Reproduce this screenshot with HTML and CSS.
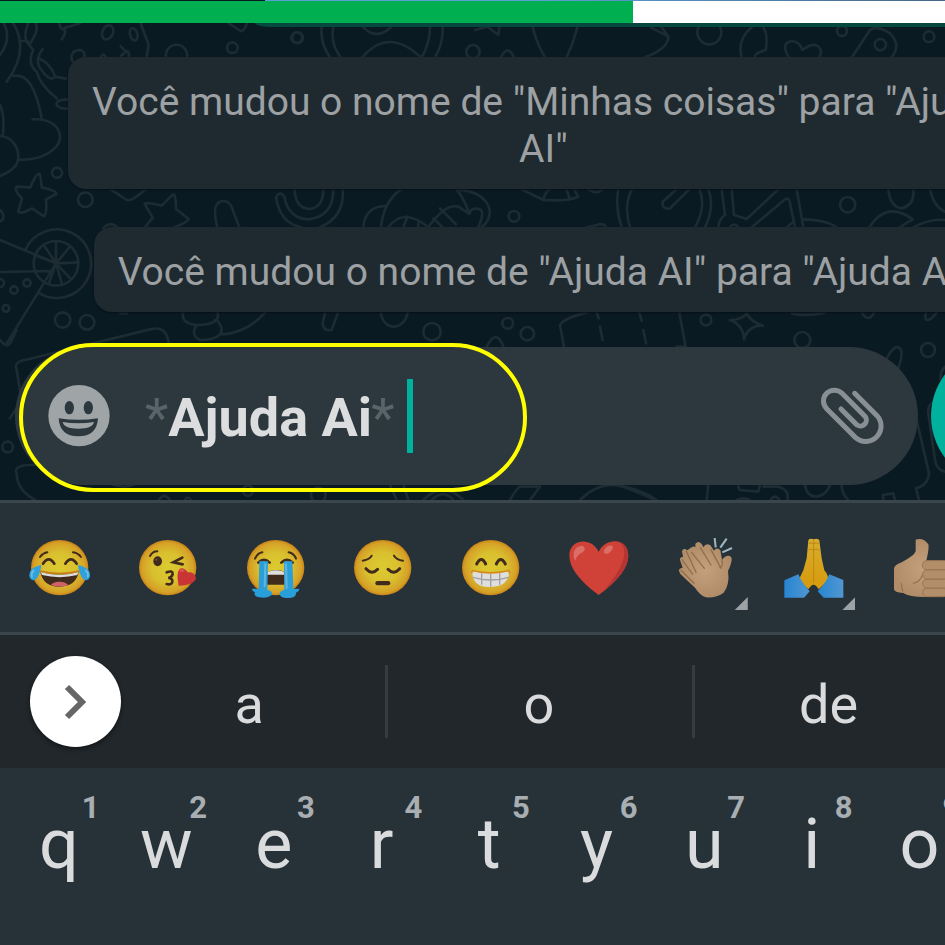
FILE: index.html
```html
<!DOCTYPE html>
<html lang="pt-BR">
<head>
<meta charset="utf-8">
<meta name="viewport" content="width=device-width, initial-scale=1">
<title>Ajuda Ai</title>
<link rel="stylesheet" href="styles.css">
</head>
<body>
<main class="screen">
  <section class="chat">
    <svg class="doodles" viewBox="0 0 2835 1500" preserveAspectRatio="xMinYMin slice" aria-hidden="true">
      <!-- upper left: foliage, giraffe, clouds -->
      <path d="M0 165Q40 110 5 60M40 70Q90 150 20 245M40 228Q100 215 125 355M98 358C150 355 180 380 180 412S130 482 60 479M0 408C35 410 55 440 55 470S30 515 0 528M0 315Q16 350 8 408"/>
      <path d="M85 70Q65 120 90 130Q120 90 105 65M58 123H78L100 150Q80 190 110 215Q120 255 170 295M128 147Q105 175 118 200Q150 250 165 230L198 236M165 228Q150 190 120 177M205 298Q160 300 172 318Q185 328 205 326M178 72Q185 95 193 84Q200 100 185 118M193 84L240 70M422 70L446 135L440 170M362 138Q375 155 380 153Q390 158 386 172M380 153L362 168M303 172Q308 155 318 172"/>
      <ellipse cx="323" cy="97" rx="16" ry="22" transform="rotate(25 323 97)"/><ellipse cx="401" cy="103" rx="11" ry="19" transform="rotate(-15 401 103)"/>
      <path d="M228 192C205 180 212 150 240 150Q258 155 252 172M498 172A32 32 0 1 1 561 172M686 70L722 93Q732 95 740 72"/>
      <path d="M118 521Q108 520 91 562L50 560Q40 568 66 595L55 634Q60 645 96 625L132 649Q142 640 138 598L169 582Q170 572 125 562Q122 525 118 521Z"/>
      <path d="M435 682L458 653L434 612Q435 605 485 617L518 584Q528 582 528 627L566 657Q565 665 524 682M332 568L380 600Q395 606 436 568M652 682Q635 615 660 605Q690 595 700 635L718 682M828 592Q840 570 853 590Q865 655 925 658Q1000 650 1000 568M828 592Q840 670 905 682M960 682Q1035 650 1028 568M884 568Q885 625 930 627Q970 622 970 568"/>
      <circle cx="171" cy="518" r="15"/><circle cx="256" cy="599" r="22"/><circle cx="697" cy="143" r="16"/><circle cx="890" cy="113" r="16"/><path d="M310 685Q332 660 354 685M0 630Q12 640 10 652T0 663"/>
      <!-- pizza and citrus -->
      <circle cx="168" cy="790" r="67"/><path d="M76 750A103 103 0 1 1 115 878M0 720L168 790L18 1034M0 816L147 813M168 790V723M168 790L210 740M168 790L235 787M168 790L214 838M168 790L187 855M168 790L146 852M168 790L132 736M168 790L104 765"/>
      <circle cx="81" cy="849" r="11"/><circle cx="42" cy="870" r="11"/><circle cx="18" cy="925" r="10"/><circle cx="0" cy="849" r="12"/><circle cx="188" cy="960" r="23"/><circle cx="261" cy="967" r="22"/>
      <path d="M50 1110Q40 1085 75 1080L450 988Q500 975 506 1030M360 940H380M550 935Q540 970 590 975Q665 975 652 935M590 975Q570 1005 600 1020Q660 1020 665 990Q662 965 645 960M665 1003Q740 1000 795 938M50 1110L65 1200L30 1255M0 1020Q20 1045 30 1030L50 990M130 1395Q35 1390 50 1420Q50 1470 105 1500"/>
      <circle cx="23" cy="1341" r="16"/><path d="M477 1500Q492 1475 510 1500M555 1500Q563 1485 572 1500M330 1450Q370 1470 410 1450"/><circle cx="744" cy="1472" r="15"/>
      <!-- upper centre: alarm clock, whale, clothes -->
      <path d="M965 82Q960 130 990 172M1000 82Q990 130 1022 172M1087 172Q1165 80 1262 172M1090 82Q1130 122 1173 82M1290 82Q1290 130 1265 172M1328 82Q1330 130 1305 172M1425 90L1462 80L1495 105L1498 82M1598 82Q1610 130 1635 172M1732 82Q1720 130 1700 172M1503 172Q1523 130 1542 172"/>
      <circle cx="1419" cy="155" r="20"/><circle cx="893" cy="113" r="16"/>
      <path d="M1090 682Q1095 620 1155 618M1143 682Q1150 605 1203 568M1165 682Q1210 620 1285 682M1370 568Q1460 575 1470 635Q1468 665 1445 682M1285 682Q1335 610 1375 620L1408 642Q1412 620 1440 628Q1455 635 1435 682M1370 568Q1395 600 1408 642M1222 650L1210 682M1255 670V682M1320 625L1368 673M1300 655L1328 682M1565 568L1630 600Q1700 605 1735 590L1722 568M1630 600Q1635 575 1650 568M1700 570L1710 598M1765 568Q1790 585 1808 568M1760 682L1790 675Q1812 668 1818 682"/><circle cx="1542" cy="649" r="16"/>
      <path d="M975 938L968 970Q970 995 995 990L1014 938M1142 938Q1150 980 1185 980Q1215 975 1223 938M1460 1040Q1490 980 1512 1045M1692 1040L1680 975Q1690 955 1760 938M1790 938L1796 955M1800 980L1808 1020"/>
      <circle cx="1296" cy="995" r="26"/><circle cx="1523" cy="970" r="16"/><circle cx="1582" cy="1001" r="20"/>
      <path d="M1170 1455L1190 1500M1210 1455L1225 1500M1270 1500Q1330 1440 1390 1500M1295 1500Q1330 1465 1360 1500M1530 1500Q1550 1465 1560 1460H1620L1590 1500M1740 1500Q1790 1450 1850 1455Q1890 1465 1965 1500"/><circle cx="955" cy="1485" r="22"/>
      <!-- right: guitar, kite, hearts, plane -->
      <path d="M1953 82L2005 110Q2005 145 1935 172M1985 82L2005 110M2255 82Q2210 120 2225 172M2290 82Q2305 105 2297 150Q2262 160 2265 172M2367 172Q2340 130 2375 123Q2400 125 2407 150Q2440 125 2455 140Q2470 155 2457 172M2556 172L2610 90Q2630 75 2670 100Q2705 135 2675 172"/>
      <circle cx="2128" cy="97" r="36"/><circle cx="2526" cy="93" r="15"/><circle cx="2641" cy="134" r="17"/><circle cx="2787" cy="110" r="16"/>
      <path d="M1855 568Q1845 620 1865 682M1895 568Q1870 620 1890 682M2098 568Q2120 620 2085 682M2125 568Q2145 620 2115 682M2030 568L1988 605Q1985 630 2010 625L2068 568M2165 568L2175 645Q2155 660 2155 682M2195 568L2202 645L2240 657L2335 568M2255 682L2355 598Q2368 590 2370 610L2385 682M2390 568L2410 682M2360 682L2375 670M2190 682Q2202 665 2215 682M2410 658Q2480 660 2510 682M2665 568Q2670 620 2705 625Q2745 615 2740 568M2790 568Q2800 620 2835 635M2608 682Q2660 600 2738 658Q2715 670 2700 682M2740 682Q2790 655 2835 660"/><circle cx="2543" cy="614" r="23"/>
      <path d="M1918 938L1925 962M1930 990L1938 1030M2038 938L2057 1040H2030M2190 960Q2230 960 2240 938Q2250 965 2290 977Q2245 975 2232 1018Q2230 975 2190 960ZM2375 940Q2420 950 2475 938M2585 938Q2605 970 2623 938M2778 938Q2770 970 2795 955L2810 938"/>
      <circle cx="2118" cy="960" r="16"/><circle cx="2407" cy="1020" r="24"/><circle cx="2784" cy="1050" r="21"/>
      <path d="M2660 1075Q2690 1020 2705 1055Q2705 1080 2695 1105M2835 1100Q2815 1120 2825 1150M2750 1260L2787 1420Q2785 1455 2748 1465L2757 1500M2835 1200Q2780 1200 2785 1240L2805 1380Q2810 1410 2835 1415M1845 1455Q1920 1465 1970 1500M2125 1455L2120 1500M2215 1460L2220 1470L2275 1475L2280 1455M2290 1460H2335Q2370 1470 2362 1500M2210 1500Q2230 1490 2250 1500M2312 1500Q2325 1480 2338 1500M2415 1455Q2420 1490 2450 1490Q2480 1485 2490 1455M2525 1455Q2525 1480 2545 1500M2650 1500L2648 1485L2680 1480L2685 1500"/>
    </svg>
    <div class="status-line"></div>
    <div class="progress"><div class="progress-done"></div></div>
    <div class="sent-bubble"></div>

    <div class="messages">
      <p class="notice">Você mudou o nome de "Minhas coisas" para "Ajuda<br>AI"</p>
      <p class="notice">Você mudou o nome de "Ajuda AI" para "Ajuda Ai"</p>
    </div>

    <form class="composer">
      <div class="pill">
        <button class="icon-button" type="button" aria-label="Emojis">
          <svg class="smile" viewBox="144 167 186 186">
            <circle cx="237" cy="259" r="92" fill="#9fa4a7"/>
            <ellipse cx="208" cy="235" rx="14" ry="20" fill="#2d383e"/><ellipse cx="265" cy="235" rx="14" ry="20" fill="#2d383e"/>
            <path d="M176 267Q235 276 294 267Q291 321 235 321T176 267Z" fill="#2d383e"/>
            <path d="M188 278Q235 286 282 278Q278 298 235 298T188 278Z" fill="#9fa4a7"/>
          </svg>
        </button>
        <div class="entry">
          <span class="mark">*</span><input class="entry-text" type="text" value="Ajuda Ai" aria-label="Mensagem"><span class="mark">*</span>
          <span class="caret"></span>
        </div>
        <button class="icon-button" type="button" aria-label="Anexar">
          <svg class="clip" viewBox="611 168 201 180"><path d="M718 190L785 257A46 46 0 0 1 720 322L634 236A32 32 0 0 1 680 190L750 260A18 18 0 0 1 725 285L677 237"/></svg>
        </button>
      </div>
      <button class="send" type="submit" aria-label="Enviar"></button>
      <span class="highlight"></span>
    </form>
  </section>

  <section class="keyboard" aria-label="Teclado">
    <svg class="defs" aria-hidden="true">
      <defs>
        <radialGradient id="face"><stop offset="0" stop-color="#dcca30"/><stop offset=".55" stop-color="#d9c02f"/><stop offset=".9" stop-color="#d5a127"/><stop offset="1" stop-color="#c98318"/></radialGradient>
        <linearGradient id="hands" x1="0" y1="0" x2="0" y2="1"><stop offset="0" stop-color="#d7ac2d"/><stop offset="1" stop-color="#d79a0c"/></linearGradient>
        <linearGradient id="sleeve"><stop offset="0" stop-color="#2785d0"/><stop offset="1" stop-color="#5197d2"/></linearGradient>
        <radialGradient id="skin"><stop offset="0" stop-color="#c4a17c"/><stop offset="1" stop-color="#b08d68"/></radialGradient>
      </defs>
    </svg>
    <div class="emoji-row">
      <button class="emoji" type="button" aria-label="Chorando de rir">
        <svg viewBox="80 42 201 201"><ellipse cx="181" cy="143" rx="86" ry="83" fill="url(#face)"/>
          <g class="ink"><path d="M122 111Q131 99 144 97M221 97Q236 99 245 111" stroke-width="6"/><path d="M131 131Q148 105 165 131M198 131Q215 105 232 131" stroke-width="8"/></g>
          <path d="M123 156Q181 172 238 156Q230 199 181 200T123 156Z" fill="#412b1d"/><path d="M124 156Q181 174 237 156L234 165Q181 178 128 165Z" fill="#dedede"/><path d="M154 196Q162 184 181 185T208 196Q181 203 154 196Z" fill="#cf6267"/><path d="M122 153Q181 168 239 153" fill="none" stroke="#c87b16" stroke-width="4" stroke-linecap="round"/>
          <path d="M126 135Q119 180 101 181Q85 176 92 155Q97 142 126 135ZM236 135Q243 180 261 181Q277 176 270 155Q265 142 236 135Z" fill="#2fa2dc"/><path d="M103 151Q95 159 98 170M260 151Q268 159 265 170" fill="none" stroke="#76bce3" stroke-width="5" stroke-linecap="round"/></svg>
      </button>
      <button class="emoji" type="button" aria-label="Mandando beijo">
        <svg viewBox="403 42 201 201"><ellipse cx="504" cy="143" rx="86" ry="83" fill="url(#face)"/>
          <path class="ink" d="M451 108Q459 94 473 94" stroke-width="6"/><ellipse cx="474" cy="124" rx="13" ry="15" fill="#412b1d"/><circle cx="470" cy="119" r="3" fill="#705b32"/>
          <path class="ink" d="M548 113L521 127L549 133M501 157Q519 150 519 162Q517 172 506 174Q519 175 518 185Q516 196 501 192" stroke-width="8"/>
          <path d="M537 197Q530 160 538 149Q550 138 564 157Q585 155 589 174Q586 195 537 197Z" fill="#c93434"/><path d="M541 155Q547 146 553 154" stroke="#da5555" stroke-width="7" fill="none"/></svg>
      </button>
      <button class="emoji" type="button" aria-label="Chorando alto">
        <svg viewBox="726 42 201 201"><ellipse cx="827" cy="143" rx="86" ry="83" fill="url(#face)"/>
          <g class="ink"><path d="M765 116Q773 99 787 97M866 97Q882 100 888 116" stroke-width="6"/><path d="M775 128Q792 111 809 128M844 128Q861 111 878 128" stroke-width="8"/></g>
          <path d="M799 194V165Q801 152 827 150T854 165V194Z" fill="#412b1d"/><path d="M801 160Q805 152 827 151T853 160V164H801Z" fill="#dedede"/>
          <path d="M778 124H804L802 210Q822 214 814 226Q802 237 774 231Q760 227 765 217Q752 211 758 206L776 207ZM852 124H877L880 207L896 206Q902 212 888 218Q889 230 873 233Q845 237 840 225Q835 214 853 210Z" fill="#299fda"/><path d="M796 130L794 202M858 130L860 206" fill="none" stroke="#62b5e3" stroke-width="6"/></svg>
      </button>
      <button class="emoji" type="button" aria-label="Pensativo">
        <svg viewBox="88 42 201 201"><ellipse cx="189" cy="143" rx="86" ry="83" fill="url(#face)"/>
          <g class="ink"><path d="M129 122Q151 118 156 107M223 107Q231 120 250 122" stroke-width="6"/><path d="M139 146Q157 166 174 148M205 148Q222 166 240 146" stroke-width="9"/></g><rect x="167" y="183" width="45" height="13" rx="6" fill="#412b1d"/></svg>
      </button>
      <button class="emoji" type="button" aria-label="Sorriso radiante">
        <svg viewBox="411 42 201 201"><ellipse cx="512" cy="143" rx="86" ry="83" fill="url(#face)"/>
          <path class="ink" d="M470 132Q484 105 497 132M529 132Q542 105 556 132" stroke-width="9"/>
          <path d="M457 154Q512 166 567 154Q568 199 512 201T457 154Z" fill="#dedede"/><path d="M459 172Q512 188 566 172M485 160V194M512 162V200M539 160V194" fill="none" stroke="#a0a0a3" stroke-width="4"/><path d="M455 160Q455 149 464 153Q512 164 560 153Q570 149 568 160" fill="none" stroke="#d58b19" stroke-width="5"/></svg>
      </button>
      <button class="emoji" type="button" aria-label="Coração">
        <svg viewBox="734 42 201 201"><path d="M835 225Q747 160 747 107C747 55 815 50 835 96C855 50 924 53 924 107Q923 160 835 225Z" fill="#d04137"/><path d="M889 63Q912 69 912 99Q912 140 850 213Q924 155 924 107Q922 69 889 63Z" fill="#b53434"/><path d="M764 123Q753 96 770 82Q788 71 793 84Q796 94 778 101Q768 109 764 123Z" fill="#db6f68"/><ellipse cx="864" cy="89" rx="16" ry="9" transform="rotate(-40 864 89)" fill="#db6f68"/></svg>
      </button>
      <button class="emoji has-more" type="button" aria-label="Palmas">
        <svg viewBox="96 42 201 201"><path d="M224 54L227 82M260 56L241 83M276 84L247 97" stroke="#9eb7c2" stroke-width="6" fill="none"/>
          <path d="M117 153Q115 145 128 143L121 123Q116 112 129 111L126 94Q130 82 142 91L157 80Q165 78 167 82Q162 67 176 66Q184 67 190 82Q198 68 211 76L222 92Q230 80 241 90L246 119Q260 102 273 110Q280 119 264 153Q270 195 251 218Q228 235 197 232Q180 226 165 203L121 162Z" fill="url(#skin)"/><path d="M123 151L162 190M126 119L158 163M139 94L168 157M155 97L193 145M181 83L213 135M213 89L243 145M246 119Q250 141 240 142" fill="none" stroke="#916f4d" stroke-width="4" stroke-linecap="round"/></svg>
      </button>
      <button class="emoji has-more" type="button" aria-label="Mãos unidas">
        <svg viewBox="419 42 201 201"><path d="M504 61Q507 54 520 58Q533 53 537 61L544 115L552 151Q567 168 562 183L535 208Q520 180 504 208L475 180L489 151L499 115Z" fill="url(#hands)"/><path d="M520 60V189M504 90Q511 84 519 90Q528 84 537 90M505 71Q512 66 519 71Q528 66 536 71" fill="none" stroke="#bd8813" stroke-width="3"/><path d="M432 181L474 163Q486 190 508 214L491 233H432Z" fill="url(#sleeve)"/><path d="M609 180L567 163Q556 190 532 214L550 233H609Z" fill="url(#sleeve)"/></svg>
      </button>
      <button class="emoji has-more" type="button" aria-label="Joinha">
        <svg viewBox="744 42 201 201"><path d="M827 59Q849 51 865 73Q868 84 859 122H920Q933 130 926 142Q938 154 926 166Q936 180 922 190Q930 204 919 221Q905 232 855 231Q807 231 790 219Q762 218 762 207V147Q761 136 785 127Q823 107 827 94Z" fill="url(#skin)"/><path d="M784 190Q785 207 789 215M819 190Q840 187 851 158" fill="none" stroke="#977451" stroke-width="4"/><g fill="#b28e69" stroke="#9a7753" stroke-width="3"><rect x="847" y="122" width="79" height="27" rx="13"/><rect x="848" y="150" width="82" height="27" rx="13"/><rect x="848" y="178" width="78" height="26" rx="13"/><rect x="848" y="205" width="74" height="25" rx="12"/></g></svg>
      </button>
      <button class="emoji" type="button" aria-label="Mais emojis"></button>
    </div>

    <div class="suggestions">
      <button class="expand" type="button" aria-label="Expandir">
        <svg viewBox="0 0 24 36"><path d="M3 3L18 18L3 33"/></svg>
      </button>
      <button class="word" type="button">a</button>
      <button class="word" type="button">o</button>
      <button class="word" type="button">de</button>
    </div>

    <div class="keys">
      <button class="key" type="button">q<span class="digit">1</span></button>
      <button class="key" type="button">w<span class="digit">2</span></button>
      <button class="key" type="button">e<span class="digit">3</span></button>
      <button class="key" type="button">r<span class="digit">4</span></button>
      <button class="key" type="button">t<span class="digit">5</span></button>
      <button class="key" type="button">y<span class="digit">6</span></button>
      <button class="key" type="button">u<span class="digit">7</span></button>
      <button class="key" type="button">i<span class="digit">8</span></button>
      <button class="key" type="button">o<span class="digit">9</span></button>
      <button class="key" type="button">p<span class="digit">0</span></button>
    </div>
  </section>
</main>
</body>
</html>
```
FILE: styles.css
```css
* {
  box-sizing: border-box;
}

body {
  margin: 0;
  background: #263238;
  font-family: Roboto, "Liberation Sans", sans-serif;
  overflow: hidden;
}

button,
input {
  margin: 0;
  padding: 0;
  border: 0;
  background: none;
  color: inherit;
  font: inherit;
}

svg {
  display: block;
}

/* The phone screen is wider than the window; its right part runs off the edge. */
.screen {
  min-height: 100vh;
  display: flex;
  flex-direction: column;
  overflow: hidden;
}

.chat {
  position: relative;
  background: #0a1a22;
  overflow: hidden;
  padding-bottom: 15px;
}

.doodles {
  position: absolute;
  inset: 0;
  width: 100%;
  height: 100%;
  fill: none;
  stroke: #1d2b33;
  stroke-width: 8;
  stroke-linecap: round;
  stroke-linejoin: round;
}

.status-line {
  position: relative;
  height: 1px;
  margin-left: 28%;
  background: linear-gradient(90deg, #5b9fd6 40%, #466786);
}

.progress {
  position: relative;
  height: 22px;
  background: #fff;
}

.progress-done {
  width: 67%;
  height: 100%;
  background: #00b050;
}

.sent-bubble {
  position: relative;
  height: 4px;
  margin-left: 27%;
  border-bottom-left-radius: 16px 4px;
  background: #05483f;
}

.messages {
  position: relative;
  display: flex;
  flex-direction: column;
  align-items: center;
  gap: 38px;
  margin-right: -15%;
  padding: 30px 0 35px;
}

.notice {
  margin: 0;
  padding: 22px 24px 16px;
  border-radius: 18px;
  background: #1f2a30;
  box-shadow: 0 1px 2px #061117;
  color: #9da1a3;
  font-size: 39px;
  line-height: 47px;
  text-align: center;
  white-space: nowrap;
}

.composer {
  position: relative;
  display: flex;
  gap: 13px;
  margin-right: -15%;
  padding: 0 18px 0 15px;
}

.pill {
  flex: 1;
  display: flex;
  align-items: center;
  height: 138px;
  padding: 0 32px 0 33px;
  border-radius: 70px;
  background: #2d383e;
}

.smile {
  width: 62px;
  height: 62px;
}

.clip {
  width: 67px;
  height: 60px;
  fill: none;
  stroke: #899095;
  stroke-width: 15;
  stroke-linecap: round;
}

.entry {
  flex: 1;
  display: flex;
  align-items: center;
  padding-left: 35px;
  color: #dcddde;
  font-size: 54px;
  line-height: 74px;
}

.entry-text {
  width: 203px;
  height: 74px;
  padding-top: 4px;
  font-weight: 700;
  caret-color: transparent;
  outline: 0;
}

.mark {
  padding-top: 4px;
  color: #59646a;
}

.caret {
  width: 6px;
  height: 74px;
  margin-left: 12px;
  background: #00b19d;
}

.send {
  width: 138px;
  height: 138px;
  border-radius: 50%;
  background: #00b19d;
}

/* Marker ring laid over the typed text. */
.highlight {
  position: absolute;
  top: -4px;
  left: 19px;
  width: 508px;
  height: 149px;
  border: 4px solid #ff0;
  border-radius: 75px;
  pointer-events: none;
}

.keyboard {
  margin-right: -15%;
  background: #263238;
}

.defs {
  position: absolute;
  width: 0;
  height: 0;
}

.emoji-row {
  display: grid;
  grid-template-columns: repeat(10, 1fr);
  height: 135px;
  padding: 0 4px 0 6px;
  border: solid #3b464c;
  border-width: 3px 0;
}

.emoji {
  position: relative;
  display: grid;
  place-items: center;
}

.emoji svg {
  width: 67px;
  height: 67px;
}

.ink {
  fill: none;
  stroke: #412b1d;
  stroke-linecap: round;
}

.has-more::after {
  content: "";
  position: absolute;
  right: 12px;
  bottom: 22px;
  width: 13px;
  height: 13px;
  background: #9da2a6;
  clip-path: polygon(100% 0, 100% 100%, 0 100%);
}

.suggestions {
  display: grid;
  grid-template-columns: 121px 264fr 307fr 272fr 122fr;
  align-items: center;
  height: 133px;
  background: #22272b;
  color: #dadbdc;
  font-size: 54px;
}

.expand {
  display: grid;
  place-items: center;
  justify-self: end;
  width: 91px;
  height: 91px;
  border-radius: 50%;
  background: #fff;
  box-shadow: 0 2px 4px #111518;
}

.expand svg {
  width: 24px;
  height: 36px;
  fill: none;
  stroke: #666;
  stroke-width: 6;
}

.word {
  height: 73px;
  padding: 6px 3px 0 0;
  line-height: 67px;
}

.word:nth-child(2) {
  padding-right: 8px;
}

.word + .word {
  border-left: 3px solid #373c40;
}

.keys {
  display: grid;
  grid-template-columns: repeat(10, 1fr);
  padding: 31px 6px 0 5px;
  color: #dadbdc;
  font-size: 70px;
  line-height: 90px;
}

.key {
  position: relative;
  height: 90px;
}

.digit {
  position: absolute;
  top: -9px;
  left: calc(50% + 23px);
  color: #a8aeb1;
  font-size: 31px;
  font-weight: 700;
  line-height: 36px;
}
```
